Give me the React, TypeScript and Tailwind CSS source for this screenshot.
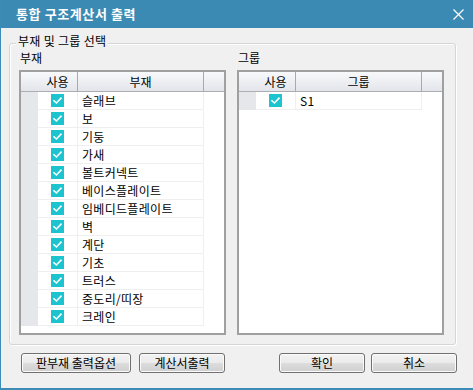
import React from "react";

const parts = [
  "슬래브",
  "보",
  "기둥",
  "가새",
  "볼트커넥트",
  "베이스플레이트",
  "임베디드플레이트",
  "벽",
  "계단",
  "기초",
  "트러스",
  "중도리/띠장",
  "크레인",
];

const groups = ["S1"];

const font = { fontFamily: '"Noto Sans CJK KR", "Noto Sans", sans-serif' };

function CheckBox() {
  return (
    <span className="w-[13px] h-[13px] bg-[#1cc4cf] flex items-center justify-center">
      <svg width="13" height="13" viewBox="0 0 13 13" fill="none">
        <path d="M3 6.8 L5.4 9 L10 4.2" stroke="white" strokeWidth="1.6" strokeLinecap="square" />
      </svg>
    </span>
  );
}

function ListBox({ title, rows }: { title: string; rows: string[] }) {
  return (
    <div className="w-[207px] h-[265px] border-2 border-[#a0a0a0] bg-white text-[12px] text-black">
      {/* header */}
      <div className="flex h-[20px] border-b border-[#acadb3] bg-gradient-to-b from-[#f8f9fb] to-[#e3e5eb]">
        <div className="w-[17px]" />
        <div className="w-[40px] border-r border-[#a9a9ad] flex items-center justify-center leading-[19px]">사용</div>
        <div className="w-[126px] border-r border-[#a9a9ad] flex items-center justify-center leading-[19px]">{title}</div>
        <div className="flex-1" />
      </div>
      {rows.map((r) => (
        <div key={r} className="flex h-[18px]">
          <div className="w-[17px] bg-[#e6e7eb]" />
          <div className="w-[40px] border-r border-b border-[#efefef] flex items-center justify-center">
            <CheckBox />
          </div>
          <div className="w-[126px] border-r border-b border-[#efefef] pl-[4px] leading-[17px] tracking-[0.3px]">{r}</div>
        </div>
      ))}
    </div>
  );
}

function Btn({ label, width }: { label: string; width: string }) {
  return (
    <button
      className={`${width} h-[20px] rounded-[3px] border border-[#707070] shadow-[inset_0_0_0_1px_#fbfbfb] bg-[linear-gradient(#f2f2f2_0%,#ebebeb_50%,#dddddd_50%,#cfcfcf_100%)] text-[12px] leading-[18px] text-black flex items-center justify-center`}
    >
      {label}
    </button>
  );
}

export default function App() {
  return (
    <div style={font} className="w-[473px] h-[390px] bg-[#f0f0f0] border-l border-b-2 border-[#3d8cb5] flex flex-col overflow-hidden">
      {/* Title bar */}
      <div className="h-[28px] shrink-0 bg-[#3b8ab4] flex items-center pl-[15px] pr-[9px]">
        <span className="text-white font-bold text-[13px] tracking-[0.6px] flex-1">통합 구조계산서 출력</span>
        <svg width="11" height="11" viewBox="0 0 11 11">
          <path d="M0.5 0.5 L10.5 10.5 M10.5 0.5 L0.5 10.5" stroke="white" strokeWidth="1.2" />
        </svg>
      </div>

      {/* Group box */}
      <div className="relative ml-[8px] mt-[15px] w-[447px] h-[302px] rounded-[3px] border border-[#d5d5d5] shadow-[inset_1px_1px_0_#ffffff,1px_1px_0_#ffffff] pl-[9px] pr-[11px] pt-[7px]">
        <span className="absolute left-[6px] top-[-10px] px-[2px] bg-[#f0f0f0] text-[12px] leading-[14px] tracking-[0.3px] text-black">
          부재 및 그룹 선택
        </span>
        <div className="flex gap-[11px]">
          <div className="flex flex-col">
            <div className="h-[14px] leading-[14px] text-[12px] pl-[1px] mb-[5px]">부재</div>
            <ListBox title="부재" rows={parts} />
          </div>
          <div className="flex flex-col">
            <div className="h-[14px] leading-[14px] text-[12px] pl-[1px] mb-[5px]">그룹</div>
            <ListBox title="그룹" rows={groups} />
          </div>
        </div>
      </div>

      {/* Buttons */}
      <div className="flex mt-[8px] pl-[20px]">
        <Btn label="판부재 출력옵션" width="w-[110px]" />
        <div className="ml-[8px]">
          <Btn label="계산서출력" width="w-[86px]" />
        </div>
        <div className="ml-[54px]">
          <Btn label="확인" width="w-[86px]" />
        </div>
        <div className="ml-[6px]">
          <Btn label="취소" width="w-[86px]" />
        </div>
      </div>
    </div>
  );
}
